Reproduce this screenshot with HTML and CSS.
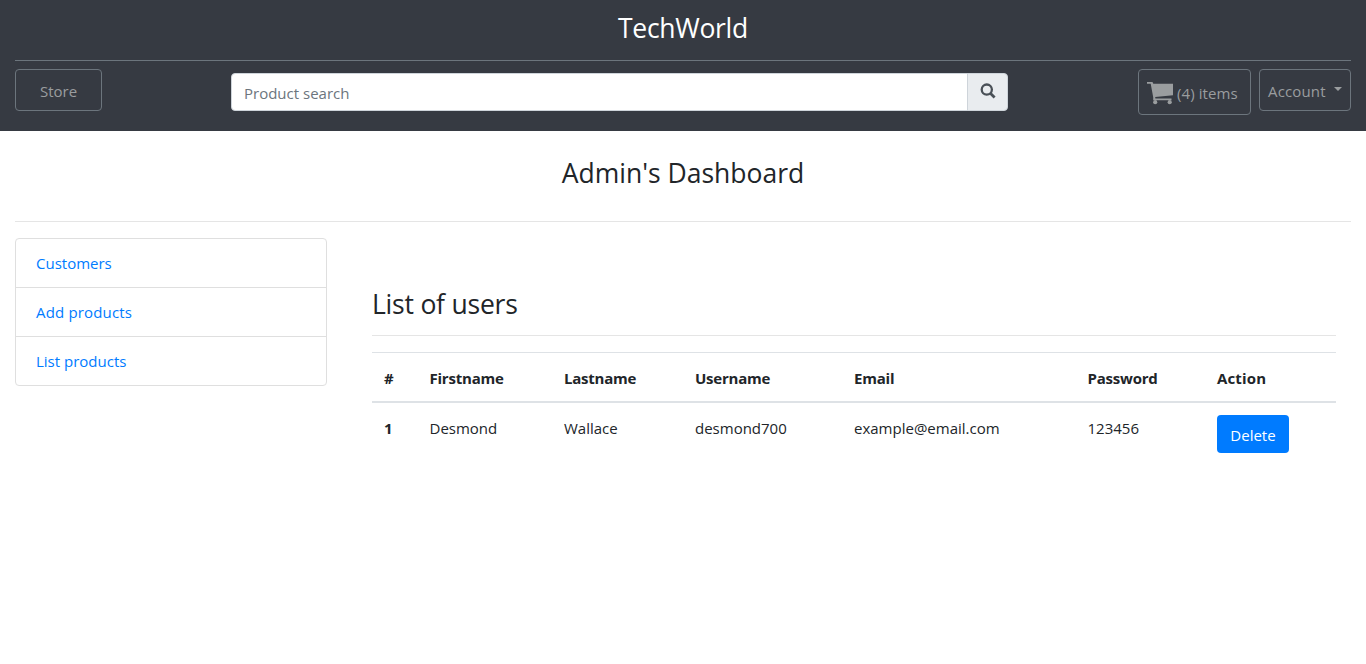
FILE: index.html
```html
<!DOCTYPE html>
<html lang="en">
<head>
<meta charset="utf-8">
<title>TechWorld</title>
<link rel="stylesheet" href="styles.css">
</head>
<body>
<header class="header">
  <h3 class="brand">TechWorld</h3>
  <nav class="toolbar">
    <a class="nav-btn store">Store</a>
    <form class="search">
      <input class="search-input" type="text" placeholder="Product search">
      <button class="search-btn" type="button" aria-label="Search">
        <svg width="16" height="16" viewBox="0 0 16 16"><circle cx="6.8" cy="6.6" r="5.100" fill="none" stroke="#495057" stroke-width="2.300"/><path d="M10.600 10.400l4 4" stroke="#495057" stroke-width="2.800"/></svg>
      </button>
    </form>
    <a class="nav-btn cart">
      <svg width="27" height="24" viewBox="0 0 27 24"><path d="M0 1h5.500l.8 1.800H26v11.400L8.200 15.900l.2 1.500H24.500v1.800H6.200v-3L3.700 2.700H0z"/><circle cx="8.200" cy="21.200" r="2.100"/><circle cx="22.700" cy="21.200" r="2.100"/></svg>
      <span class="cart-label">(4) items</span>
    </a>
    <a class="nav-btn account"><span class="account-label">Account</span><i class="caret"></i></a>
  </nav>
</header>
<h3 class="page-title"><span>Admin's Dashboard</span></h3>
<main class="content">
  <ul class="menu">
    <li><a>Customers</a></li>
    <li><a class="add">Add products</a></li>
    <li><a>List products</a></li>
  </ul>
  <section class="users">
    <h3 class="users-title">List of users</h3>
    <table class="table">
      <colgroup><col class="c-num"><col class="c-first"><col class="c-last"><col class="c-user"><col class="c-email"><col class="c-pass"><col class="c-act"></colgroup>
      <thead><tr><th>#</th><th>Firstname</th><th>Lastname</th><th>Username</th><th>Email</th><th>Password</th><th class="action">Action</th></tr></thead>
      <tbody><tr><th>1</th><td>Desmond</td><td>Wallace</td><td>desmond700</td><td>example@email.com</td><td>123456</td><td><button class="delete" type="button">Delete</button></td></tr></tbody>
    </table>
  </section>
</main>
</body>
</html>
```
FILE: styles.css
```css
* { box-sizing: border-box; }
body { margin: 0; background: #fff; color: #212529; font: 15px/24px "Open Sans", "Noto Sans", sans-serif; }
h3 { margin: 0; font-weight: 400; font-size: 26.5px; line-height: 34px; }
input, button { font: inherit; margin: 0; }
.header { height: 131px; padding: 11px 15px 0; background: #363a42; }
.brand { height: 50px; border-bottom: 1px solid #6c757d; color: #fff; text-align: center; letter-spacing: -.3px; }
.toolbar { display: flex; align-items: flex-start; padding-top: 8px; }
.nav-btn { display: flex; align-items: center; height: 42px; border: 1px solid #6c757d; border-radius: 4px; color: #9a9d9f; }
.store { width: 87px; justify-content: center; padding-top: 1px; }
.search { display: flex; width: 777px; height: 38px; margin: 4px 130px 0 129px; }
.search-input { flex: 1; min-width: 0; border: 1px solid #ced4da; border-radius: 4px 0 0 4px; padding: 1px 12px 0; background: #fff; }
.search-input::placeholder { color: #6c757d; opacity: 1; }
.search-btn { display: flex; align-items: center; justify-content: center; width: 41px; margin-left: -1px; padding: 0 0 2px; border: 1px solid #ced4da; border-radius: 0 4px 4px 0; background: #e9ecef; }
.cart { width: 113px; height: 46px; margin-right: 8px; padding-left: 8px; gap: 3px; }
.cart svg { fill: #9a9d9f; margin-top: 1px; }
.cart-label { padding-top: 1px; letter-spacing: .1px; }
.account { width: 92px; padding: 1px 0 0 8px; }
.account-label { letter-spacing: .15px; }
.caret { margin: -3px 0 0 8px; border: 4.5px solid transparent; border-top-color: #9a9d9f; border-bottom: 0; }
.page-title { height: 91px; margin: 0 15px; padding-top: 25px; border-bottom: 1px solid #e5e5e5; text-align: center; }
.content { display: flex; align-items: flex-start; padding: 16px 30px 0 15px; }
.menu { width: 312px; margin: 0 45px 0 0; padding: 0; list-style: none; border: 1px solid #dfdfdf; border-radius: 4px; color: #007bff; }
.menu li { height: 49px; padding: 12px 20px 0; border-bottom: 1px solid #dfdfdf; }
.menu .add { letter-spacing: .16px; }
.menu li:last-child { height: 48px; border: 0; }
.users { width: 964px; padding-top: 48px; }
.users-title { height: 50px; padding-top: 1px; border-bottom: 1px solid #e5e5e5; letter-spacing: -.22px; }
.table { width: 964px; margin-top: 16px; table-layout: fixed; border-collapse: separate; border-spacing: 0; }
.table th, .table td { padding: 13px 0 0 12px; vertical-align: top; text-align: left; }
.table thead th { height: 51px; border-top: 1px solid #dee2e6; border-bottom: 2px solid #dee2e6; letter-spacing: -.22px; }
.table thead .action { letter-spacing: .15px; }
.c-num { width: 45.5px; } .c-first { width: 134.5px; } .c-last { width: 131px; } .c-user { width: 159px; } .c-email { width: 233.5px; } .c-pass { width: 129.5px; } .c-act { width: 131px; }
.table td:last-child { padding-top: 12px; }
.delete { display: block; width: 72px; height: 38px; padding: 1px 0 0; border: 0; border-radius: 4px; background: #007bff; color: #fff; }
```
